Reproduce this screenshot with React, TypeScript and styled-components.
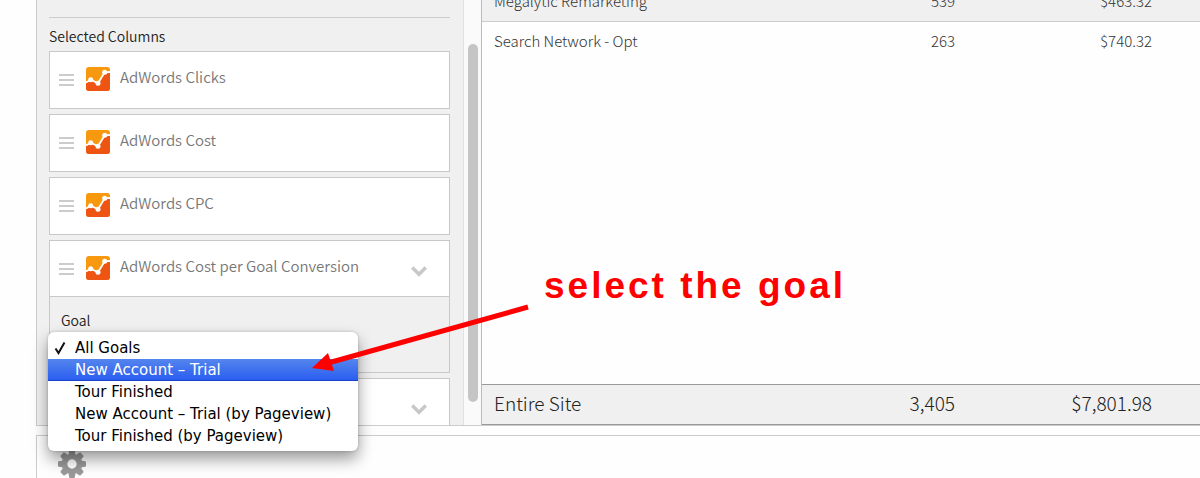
import React, { useState } from "react";
import styled, { createGlobalStyle } from "styled-components";

const GlobalStyle = createGlobalStyle`
  * { box-sizing: border-box; }
  body { margin: 0; background: #fff; }
`;

const Page = styled.div`
  position: relative;
  display: flex;
  flex-direction: column;
  gap: 9px;
  height: 100vh;
  padding-left: 36px;
  overflow: hidden;
  background: #fefefe;
  font-family: "Noto Sans CJK SC", "Open Sans", sans-serif;
  font-weight: 300;
  color: #333;
`;

const Workspace = styled.main`
  flex: 1;
  min-height: 0;
  display: flex;
  border-bottom: 1px solid #ccc;
`;

const Sidebar = styled.aside`
  flex: 0 0 428px;
  padding: 17px 13px 0 12px;
  overflow: hidden;
  background: #f0f0f0;
  border: solid #ccc;
  border-width: 0 1px;
  border-right-color: #e2e2e2;
`;

const SectionTitle = styled.h2`
  margin: 0 0 3px;
  padding: 6px 0 0;
  border-top: 1px solid #ccc;
  font-size: 14px;
  line-height: 24px;
  font-weight: 350;
  color: #222;
`;

const ColumnList = styled.ul`
  display: flex;
  flex-direction: column;
  gap: 5px;
  margin: 0;
  padding: 0;
  list-style: none;
`;

const ColumnCard = styled.li`
  border: 1px solid #c8c8c8;
  background: #fff;
`;

const ColumnHead = styled.div<{ $open?: boolean }>`
  display: flex;
  align-items: center;
  height: ${(p) => (p.$open ? "55px" : "56px")};
  padding: 0 22px 2px 9px;
`;

const ColumnName = styled.span`
  flex: 1;
  margin-left: 10px;
  padding-bottom: 4px;
  font-size: 15px;
  line-height: 24px;
  font-weight: 350;
  color: #777;
`;

const Grip = styled.span`
  display: flex;
  align-items: center;
  width: 15px;
  height: 12px;
  margin: 2px 12px 0 0;
  border: solid #ccc;
  border-width: 2px 0;
  &::before { content: ""; flex: 1; height: 2px; background: #ccc; }
`;

const PlainButton = styled.button`
  display: flex;
  padding: 0;
  border: 0;
  background: none;
  cursor: pointer;
`;

const ToggleButton = styled(PlainButton)`
  margin-top: 6px;
`;

const GoalField = styled.div`
  display: flex;
  flex-direction: column;
  height: 76px;
  padding: 11px;
  border-top: 1px solid #c8c8c8;
  background: #f0f0f0;
`;

const GoalLabel = styled.label`
  font-size: 14px;
  line-height: 24px;
  font-weight: 350;
  color: #222;
`;

const GoalSelect = styled.select`
  width: 270px;
  height: 24px;
  border: 1px solid #ccc;
  background: #fff;
`;

const ScrollTrack = styled.div`
  flex: 0 0 17px;
  padding: 44px 3px 23px 4px;
  background: #fafafa;
`;

const ScrollThumb = styled.div`
  height: 100%;
  border-radius: 5px;
  background: #c5c5c5;
`;

const Report = styled.section`
  flex: 1;
  min-width: 0;
  display: flex;
  flex-direction: column;
  justify-content: space-between;
  overflow: hidden;
  border-left: 1px solid #bbb;
  background: #fefefe;
`;

const DataTable = styled.table`
  width: 100%;
  table-layout: fixed;
  border-collapse: collapse;
  margin-top: -19px;
  font-size: 15px;
  line-height: 24px;
  color: #333;
`;

const TotalTable = styled(DataTable)`
  margin-top: 0;
  border: solid #999;
  border-width: 1px 0;
  font-size: 19px;
  color: #222;
`;

const Row = styled.tr<{ $shaded?: boolean }>`
  height: 40px;
  background: ${(p) => (p.$shaded ? "#f0f0f0" : "transparent")};
  border-bottom: ${(p) => (p.$shaded ? "1px solid #ccc" : "0")};
`;

const TotalRow = styled.tr`
  height: 40px;
  background: #f0f0f0;

  th, td { padding-bottom: 4px; }
`;

const NameCell = styled.th`
  padding: 0 12px;
  text-align: left;
  font-weight: inherit;
`;

const NumberCell = styled.td<{ $last?: boolean }>`
  width: ${(p) => (p.$last ? "233px" : "200px")};
  padding: 0 ${(p) => (p.$last ? "48px" : "12px")} 0 0;
  text-align: right;
`;

const BottomBar = styled.footer`
  flex: 0 0 43px;
  padding: 14px 21px 0;
  overflow: hidden;
  border: solid #ccc;
  border-width: 1px 0 0 1px;
`;

const Menu = styled.div`
  position: absolute;
  left: 48px;
  top: 332px;
  width: 310px;
  padding: 5px 0 4px;
  border-radius: 6px;
  background: #fff;
  box-shadow: 0 8px 16px rgba(0, 0, 0, 0.4), 0 0 3px rgba(0, 0, 0, 0.2);
`;

const MenuItem = styled.button<{ $active?: boolean }>`
  display: flex;
  align-items: center;
  width: 100%;
  height: 22px;
  padding: 0 0 0 6px;
  border: 0;
  background: ${(p) => (p.$active ? "linear-gradient(#5585ee, #2a5ef0 95%, #1a3fc8 95%)" : "none")};
  color: ${(p) => (p.$active ? "#fff" : "#000")};
  font-family: "DejaVu Sans", sans-serif;
  font-size: 15px;
  line-height: 22px;
  text-align: left;
  white-space: nowrap;
`;

const CheckSlot = styled.span`
  display: flex;
  width: 21px;
`;

const Arrow = styled.svg`
  position: absolute;
  left: 308px;
  top: 300px;
`;

const Note = styled.p`
  position: absolute;
  left: 544px;
  top: 266px;
  margin: 0;
  font: bold 37px/40px "Liberation Sans", Arial, sans-serif;
  letter-spacing: 3px;
  color: #f00;
`;

const AnalyticsIcon = () => (
  <svg width="24" height="24" viewBox="0 0 24 24" aria-hidden="true">
    <rect width="24" height="24" rx="3" fill="#f8980f" />
    <path d="M0 15.5 4.7 12.7 12 16.3 18.7 5.3 24 5V21a3 3 0 0 1-3 3H3a3 3 0 0 1-3-3Z" fill="#ee5512" />
    <path d="M0 15.5 4.7 12.7 12 16.3 18.7 5.3 24 5" fill="none" stroke="#fff" strokeWidth="1.8" />
    <g fill="#fff">
      <circle cx="4.7" cy="12.7" r="2.5" />
      <circle cx="12" cy="16.3" r="2.5" />
      <circle cx="18.7" cy="5.3" r="2.5" />
    </g>
  </svg>
);

const Chevron = () => (
  <svg width="16" height="12" viewBox="0 0 16 12" aria-hidden="true">
    <path d="M1.2 2.5 8 9.2 14.8 2.5" fill="none" stroke="#c8c8c8" strokeWidth="3.6" />
  </svg>
);

const Gear = () => (
  <svg width="28" height="28" viewBox="-14 -14 28 28" aria-hidden="true">
    <g fill="#999">
      {[0, 45, 90, 135, 180, 225, 270, 315].map((a) => (
        <path key={a} d="M-3.6 -9 -2.6 -14H2.6L3.6 -9Z" transform={`rotate(${a})`} />
      ))}
    </g>
    <circle r="7.4" fill="none" stroke="#999" strokeWidth="5.4" />
  </svg>
);

const Check = () => (
  <svg width="12" height="14" viewBox="0 0 12 14" aria-hidden="true">
    <path d="M1.5 7.5 4.5 12 10.5 1.5" fill="none" stroke="#111" strokeWidth="2" />
  </svg>
);

const goals = [
  "All Goals",
  "New Account – Trial",
  "Tour Finished",
  "New Account – Trial (by Pageview)",
  "Tour Finished (by Pageview)",
];

const columns = [
  { name: "AdWords Clicks" },
  { name: "AdWords Cost" },
  { name: "AdWords CPC" },
  { name: "AdWords Cost per Goal Conversion", expands: true, open: true },
  { name: "", expands: true },
];

export default function App() {
  const [goal, setGoal] = useState(goals[0]);
  return (
    <Page>
      <GlobalStyle />
      <Workspace>
        <Sidebar>
          <SectionTitle>Selected Columns</SectionTitle>
          <ColumnList>
            {columns.map((c, i) => (
              <ColumnCard key={i}>
                <ColumnHead $open={c.open}>
                  <Grip />
                  <AnalyticsIcon />
                  <ColumnName>{c.name}</ColumnName>
                  {c.expands && (
                    <ToggleButton aria-label="Toggle column settings">
                      <Chevron />
                    </ToggleButton>
                  )}
                </ColumnHead>
                {c.open && (
                  <GoalField>
                    <GoalLabel htmlFor="goal">Goal</GoalLabel>
                    <GoalSelect id="goal" value={goal} onChange={(e) => setGoal(e.target.value)}>
                      {goals.map((g) => (
                        <option key={g}>{g}</option>
                      ))}
                    </GoalSelect>
                  </GoalField>
                )}
              </ColumnCard>
            ))}
          </ColumnList>
        </Sidebar>
        <ScrollTrack>
          <ScrollThumb />
        </ScrollTrack>
        <Report>
          <DataTable>
            <tbody>
              <Row $shaded>
                <NameCell scope="row">Megalytic Remarketing</NameCell>
                <NumberCell>539</NumberCell>
                <NumberCell $last>$463.32</NumberCell>
              </Row>
              <Row>
                <NameCell scope="row">Search Network - Opt</NameCell>
                <NumberCell>263</NumberCell>
                <NumberCell $last>$740.32</NumberCell>
              </Row>
            </tbody>
          </DataTable>
          <TotalTable>
            <tbody>
              <TotalRow>
                <NameCell scope="row">Entire Site</NameCell>
                <NumberCell>3,405</NumberCell>
                <NumberCell $last>$7,801.98</NumberCell>
              </TotalRow>
            </tbody>
          </TotalTable>
        </Report>
      </Workspace>
      <BottomBar>
        <PlainButton aria-label="Settings">
          <Gear />
        </PlainButton>
      </BottomBar>
      <Menu role="listbox" aria-label="Goal">
        {goals.map((g, i) => (
          <MenuItem key={g} role="option" aria-selected={g === goal} $active={i === 1} onClick={() => setGoal(g)}>
            <CheckSlot>{g === goal && <Check />}</CheckSlot>
            {g}
          </MenuItem>
        ))}
      </Menu>
      <Arrow width="224" height="76" viewBox="308 300 224 76" aria-hidden="true">
        <path d="M528 307 328 363" stroke="#f00" strokeWidth="5" />
        <path d="M312 368 328 353 334 371Z" fill="#f00" />
      </Arrow>
      <Note>select the goal</Note>
    </Page>
  );
}
